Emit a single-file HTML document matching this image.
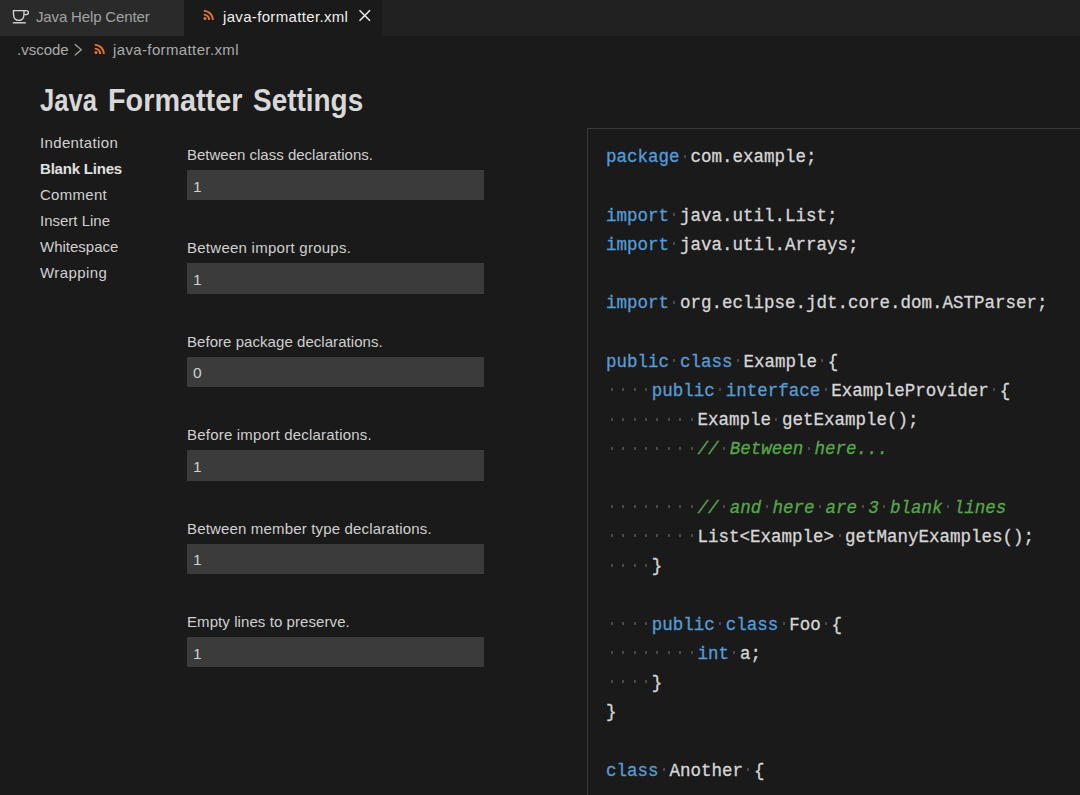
<!DOCTYPE html>
<html><head><meta charset="utf-8"><style>
*{margin:0;padding:0;box-sizing:border-box}
html,body{width:1080px;height:795px;overflow:hidden;background:#1a1a1a;font-family:"Liberation Sans",sans-serif}
.abs{position:absolute}
#tabbar{position:absolute;left:0;top:0;width:1080px;height:36px;background:#212121}
#tab1{position:absolute;left:0;top:0;width:184px;height:36px;background:#2a2a2a}
#tab2{position:absolute;left:184px;top:0;width:198px;height:36px;background:#1a1a1a}
.tabtxt{position:absolute;top:7.5px;font-size:15px;line-height:17px;white-space:nowrap}
.crumb{position:absolute;top:41px;font-size:15px;line-height:17px;color:#ababab;white-space:nowrap}
.ttl{position:absolute;top:82px;font-size:32px;line-height:36px;font-weight:bold;color:#d8d8d8;white-space:nowrap;transform-origin:0 0;transform:scaleX(0.893)}
.nav{position:absolute;left:40px;font-size:15px;line-height:17px;color:#d0d0d0;white-space:nowrap}
.nav.b{font-weight:bold;color:#e0e0e0}
.lbl{position:absolute;left:187px;font-size:15px;line-height:17px;color:#d0d0d0;white-space:nowrap}
.inp{position:absolute;left:187px;width:297px;height:30.4px;background:#3b3b3b}
.inp span{position:absolute;left:6px;top:7.5px;font-size:15.5px;line-height:17px;color:#d0d0d0}
#code{position:absolute;left:587px;top:128px;width:600px;height:800px;border-left:1px solid #393939;border-top:1px solid #393939}
#codein{}
#codein{position:absolute;left:0;top:0;font-family:"Liberation Mono",monospace;font-size:17.5px;line-height:29.2px;white-space:pre;color:#dcdcdc}
.ln{position:absolute;left:18px;height:29.2px;-webkit-text-stroke:0.3px}
i.di,i.dt{display:inline-block;height:7.7px;background:linear-gradient(#4a4a4a,#4a4a4a) 50% 0/2px 3px no-repeat;vertical-align:baseline}
i.di{width:11.45px}
i.dt{width:10.95px}
i.dc{width:11.2px}
.k{color:#569cd6}
.c{color:#57a64a;font-style:italic}
.t{color:#d6d6d6}
.ws{color:#454545}
</style></head><body>
<div id="tabbar"></div>
<div id="tab1"></div>
<div id="tab2"></div>
<svg class="abs" style="left:0;top:0" width="36" height="36" viewBox="0 0 36 36"><path d="M13.5 10.6 H24 V14 Q24 20.4 18.75 20.4 Q13.5 20.4 13.5 14 Z" stroke="#d6d6d6" stroke-width="1.35" fill="none"/><path d="M24 10.6 H26.2 Q28.4 10.6 28.4 12.6 Q28.4 14.6 26.2 14.6 H24.2" stroke="#d6d6d6" stroke-width="1.35" fill="none"/><path d="M12.8 22.8 H25.8" stroke="#d6d6d6" stroke-width="1.4"/></svg>
<div class="tabtxt" style="left:36px;color:#a3a3a3;letter-spacing:-0.15px">Java Help Center</div>
<div class="abs" style="left:203px;top:10px"><svg width="11" height="10" viewBox="0 0 11 10" style="display:block"><path d="M0.8 0.9 A9 9 0 0 1 9.9 10" stroke="#e8772e" stroke-width="1.9" fill="none"/><path d="M0.8 4.6 A5.3 5.3 0 0 1 6.2 10" stroke="#e8772e" stroke-width="1.9" fill="none"/><circle cx="2" cy="8.4" r="1.5" fill="#e8772e"/></svg></div>
<div class="tabtxt" style="left:223px;color:#f0f0f0;letter-spacing:0.335px">java-formatter.xml</div>
<svg class="abs" style="left:358px;top:9px" width="13" height="13" viewBox="0 0 13 13"><path d="M1.5 1.2 L12 11.8 M12 1.2 L1.5 11.8" stroke="#f0f0f0" stroke-width="1.45"/></svg>
<div class="crumb" style="left:17px">.vscode</div>
<svg class="abs" style="left:73px;top:43px" width="10" height="14" viewBox="0 0 10 14"><path d="M1.8 1.3 L8.3 6.8 L1.8 12.3" stroke="#ababab" stroke-width="1.2" fill="none"/></svg>
<div class="abs" style="left:93.5px;top:43.5px"><svg width="11" height="10" viewBox="0 0 11 10" style="display:block"><path d="M0.8 0.9 A9 9 0 0 1 9.9 10" stroke="#e8772e" stroke-width="1.9" fill="none"/><path d="M0.8 4.6 A5.3 5.3 0 0 1 6.2 10" stroke="#e8772e" stroke-width="1.9" fill="none"/><circle cx="2" cy="8.4" r="1.5" fill="#e8772e"/></svg></div>
<div class="crumb" style="left:113px;letter-spacing:0.37px">java-formatter.xml</div>
<div class="ttl" style="left:39.5px;transform:scaleX(0.80)">Java</div><div class="ttl" style="left:108.2px;transform:scaleX(0.90)">Formatter</div><div class="ttl" style="left:252.5px;transform:scaleX(0.873)">Settings</div>
<div class="nav" style="top:133.5px;letter-spacing:0.35px">Indentation</div>
<div class="nav b" style="top:159.7px;letter-spacing:-0.20px">Blank Lines</div>
<div class="nav" style="top:185.8px;letter-spacing:0.28px">Comment</div>
<div class="nav" style="top:211.9px;letter-spacing:0.00px">Insert Line</div>
<div class="nav" style="top:238.1px;letter-spacing:0.00px">Whitespace</div>
<div class="nav" style="top:264.2px;letter-spacing:0.40px">Wrapping</div>
<div class="lbl" style="top:146.0px;letter-spacing:0.000px">Between class declarations.</div>
<div class="inp" style="top:170.0px"><span>1</span></div>
<div class="lbl" style="top:239.4px;letter-spacing:0.260px">Between import groups.</div>
<div class="inp" style="top:263.4px"><span>1</span></div>
<div class="lbl" style="top:332.8px;letter-spacing:0.050px">Before package declarations.</div>
<div class="inp" style="top:356.8px"><span>0</span></div>
<div class="lbl" style="top:426.2px;letter-spacing:0.210px">Before import declarations.</div>
<div class="inp" style="top:450.2px"><span>1</span></div>
<div class="lbl" style="top:519.6px;letter-spacing:0.165px">Between member type declarations.</div>
<div class="inp" style="top:543.6px"><span>1</span></div>
<div class="lbl" style="top:613.0px;letter-spacing:0.080px">Empty lines to preserve.</div>
<div class="inp" style="top:637.0px"><span>1</span></div>

<div id="code"><div id="codein"><div class="ln" style="top:14.40px"><span class="k">package</span><i class="dt"></i><span class="t">com.example;</span></div><div class="ln" style="top:72.80px"><span class="k">import</span><i class="dt"></i><span class="t">java.util.List;</span></div><div class="ln" style="top:102.00px"><span class="k">import</span><i class="dt"></i><span class="t">java.util.Arrays;</span></div><div class="ln" style="top:160.40px"><span class="k">import</span><i class="dt"></i><span class="t">org.eclipse.jdt.core.dom.ASTParser;</span></div><div class="ln" style="top:218.80px"><span class="k">public</span><i class="dt"></i><span class="k">class</span><i class="dt"></i><span class="t">Example</span><i class="dt"></i><span class="t">{</span></div><div class="ln" style="top:248.00px"><i class="di"></i><i class="di"></i><i class="di"></i><i class="di"></i><span class="k">public</span><i class="dt"></i><span class="k">interface</span><i class="dt"></i><span class="t">ExampleProvider</span><i class="dt"></i><span class="t">{</span></div><div class="ln" style="top:277.20px"><i class="di"></i><i class="di"></i><i class="di"></i><i class="di"></i><i class="di"></i><i class="di"></i><i class="di"></i><i class="di"></i><span class="t">Example</span><i class="dt"></i><span class="t">getExample();</span></div><div class="ln" style="top:306.40px"><i class="di"></i><i class="di"></i><i class="di"></i><i class="di"></i><i class="di"></i><i class="di"></i><i class="di"></i><i class="di"></i><span class="c">//</span><i class="dt dc"></i><span class="c">Between</span><i class="dt dc"></i><span class="c">here...</span></div><div class="ln" style="top:364.80px"><i class="di"></i><i class="di"></i><i class="di"></i><i class="di"></i><i class="di"></i><i class="di"></i><i class="di"></i><i class="di"></i><span class="c">//</span><i class="dt dc"></i><span class="c">and</span><i class="dt dc"></i><span class="c">here</span><i class="dt dc"></i><span class="c">are</span><i class="dt dc"></i><span class="c">3</span><i class="dt dc"></i><span class="c">blank</span><i class="dt dc"></i><span class="c">lines</span></div><div class="ln" style="top:394.00px"><i class="di"></i><i class="di"></i><i class="di"></i><i class="di"></i><i class="di"></i><i class="di"></i><i class="di"></i><i class="di"></i><span class="t">List&lt;Example&gt;</span><i class="dt"></i><span class="t">getManyExamples();</span></div><div class="ln" style="top:423.20px"><i class="di"></i><i class="di"></i><i class="di"></i><i class="di"></i><span class="t">}</span></div><div class="ln" style="top:481.60px"><i class="di"></i><i class="di"></i><i class="di"></i><i class="di"></i><span class="k">public</span><i class="dt"></i><span class="k">class</span><i class="dt"></i><span class="t">Foo</span><i class="dt"></i><span class="t">{</span></div><div class="ln" style="top:510.80px"><i class="di"></i><i class="di"></i><i class="di"></i><i class="di"></i><i class="di"></i><i class="di"></i><i class="di"></i><i class="di"></i><span class="k">int</span><i class="dt"></i><span class="t">a;</span></div><div class="ln" style="top:540.00px"><i class="di"></i><i class="di"></i><i class="di"></i><i class="di"></i><span class="t">}</span></div><div class="ln" style="top:569.20px"><span class="t">}</span></div><div class="ln" style="top:627.60px"><span class="k">class</span><i class="dt"></i><span class="t">Another</span><i class="dt"></i><span class="t">{</span></div></div></div>
</body></html>
